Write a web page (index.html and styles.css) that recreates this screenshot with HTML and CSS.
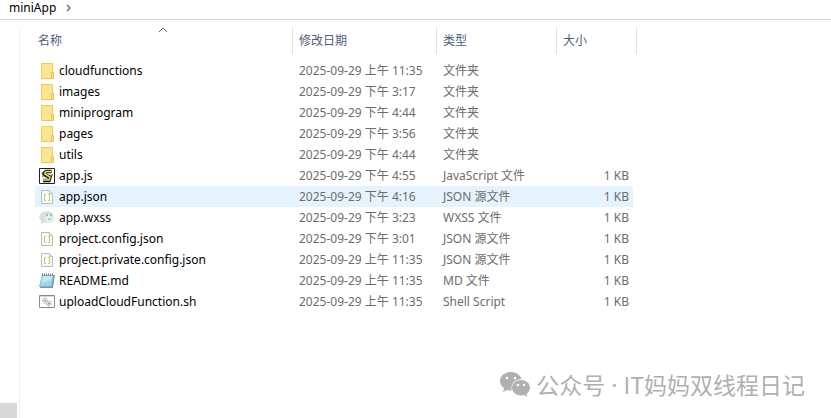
FILE: index.html
```html
<!DOCTYPE html>
<html lang="zh-CN">
<head>
    <meta charset="UTF-8">
    <meta name="viewport" content="width=device-width, initial-scale=1.0">
    <title>miniApp</title>
    <link rel="stylesheet" href="styles.css">
</head>
<body>
    <!-- icons shared by the rows -->
    <svg class="sprite" aria-hidden="true">
        <symbol id="icon-folder" viewBox="0 0 16 16">
            <path d="M2.500 0.500h11v15h-11z" fill="#ffe590" stroke="#eecb55"/>
            <path d="M12.500 9.500h2v6h-2z" fill="#ffe590" stroke="#e8c04a"/>
        </symbol>
        <symbol id="icon-js" viewBox="0 0 16 16">
            <path d="M0.500 0.500h15v15h-15z" fill="#fff" stroke="#222"/>
            <path d="M12.500 3.500H7L5 5.500l2 2 4 1.500-1 3.500H4" fill="none" stroke="#111" stroke-width="3.500"/>
            <path d="M12 3.500H7L5.500 5.500l2 1.500 3.500 2-1 3H4" fill="none" stroke="#ece45a" stroke-width="1.500"/>
            <path d="M3 8h2M12 7h2" stroke="#333"/>
        </symbol>
        <symbol id="icon-json" viewBox="0 0 16 16">
            <path d="M2.500 1.500h8l3 3v10h-11z" fill="#fbfbfb" stroke="#b9bcc0"/>
            <path d="M10.500 1.500v3h3" fill="#eee" stroke="#b9bcc0"/>
            <path d="M7 5.500H5.500V11.500H7M9 5.500h1.500v6H9" fill="none" stroke="#c5cc5c"/>
        </symbol>
        <symbol id="icon-wxss" viewBox="0 0 16 16">
            <ellipse cx="7.500" cy="7" rx="7.500" ry="6" fill="#dedfe0"/>
            <path d="M2 11v3l4-2z" fill="#dedfe0"/>
            <ellipse cx="11" cy="8.500" rx="5" ry="4.500" fill="#e9eeec"/>
            <path d="M7 4l2 1-2 1M13 4l-2 1 2 1M9 9q1.500 1 3 0" fill="none" stroke="#58cf9c"/>
        </symbol>
        <symbol id="icon-note" viewBox="0 0 16 16">
            <path d="M4 2h12l-2 13H1z" fill="#8c9398"/>
            <path d="M3 2h12l-2 12H0z" fill="#6fb5cf"/>
            <path d="M3 3h11l-2 10H1z" fill="#9bd6ea"/>
            <path d="M4 3h9l-1 4-9 3z" fill="#bfe8f5"/>
            <path d="M3 1.500h12" stroke="#777" stroke-width="2" stroke-dasharray="1 1"/>
        </symbol>
        <symbol id="icon-sh" viewBox="0 0 16 16">
            <path d="M0.500 1.500h15v12h-15z" fill="#fff" stroke="#85898c"/>
            <path d="M1 2.500h14" stroke="#d4d7da"/>
            <circle cx="6" cy="6.500" r="2.500" fill="#eee" stroke="#9a9da0" stroke-dasharray="2 1"/>
            <circle cx="6" cy="6.500" r="1" fill="#8f9498"/>
            <circle cx="10" cy="9.500" r="2.500" fill="#dceaf4" stroke="#8faec4" stroke-dasharray="2 1"/>
            <circle cx="10" cy="9.500" r="1" fill="#7f9db3"/>
        </symbol>
    </svg>

    <nav class="address-bar">
        <button type="button" class="crumb">miniApp</button>
        <svg class="crumb-arrow" viewBox="0 0 6 8" aria-hidden="true"><path d="M1 1l3 3-3 3"/></svg>
    </nav>

    <main class="explorer">
        <div class="tree-pane">
            <div class="scroll-corner"></div>
        </div>

        <div class="file-pane">
            <table class="files">
                <colgroup>
                    <col class="col-name">
                    <col class="col-date">
                    <col class="col-type">
                    <col class="col-size">
                </colgroup>
                <thead>
                    <tr>
                        <th class="name">
                            <button type="button">名称</button>
                            <svg class="sort-arrow" viewBox="0 0 10 6" aria-hidden="true"><path d="M1 5l4-4 4 4"/></svg>
                        </th>
                        <th><button type="button">修改日期</button></th>
                        <th><button type="button">类型</button></th>
                        <th><button type="button">大小</button></th>
                    </tr>
                </thead>
                <tbody>
                    <tr>
                        <td class="name"><svg class="icon"><use href="#icon-folder"/></svg>cloudfunctions</td>
                        <td>2025-09-29 上午 11:35</td><td>文件夹</td><td class="size"></td>
                    </tr>
                    <tr>
                        <td class="name"><svg class="icon"><use href="#icon-folder"/></svg>images</td>
                        <td>2025-09-29 下午 3:17</td><td>文件夹</td><td class="size"></td>
                    </tr>
                    <tr>
                        <td class="name"><svg class="icon"><use href="#icon-folder"/></svg>miniprogram</td>
                        <td>2025-09-29 下午 4:44</td><td>文件夹</td><td class="size"></td>
                    </tr>
                    <tr>
                        <td class="name"><svg class="icon"><use href="#icon-folder"/></svg>pages</td>
                        <td>2025-09-29 下午 3:56</td><td>文件夹</td><td class="size"></td>
                    </tr>
                    <tr>
                        <td class="name"><svg class="icon"><use href="#icon-folder"/></svg>utils</td>
                        <td>2025-09-29 下午 4:44</td><td>文件夹</td><td class="size"></td>
                    </tr>
                    <tr>
                        <td class="name"><svg class="icon"><use href="#icon-js"/></svg>app.js</td>
                        <td>2025-09-29 下午 4:55</td><td>JavaScript 文件</td><td class="size">1 KB</td>
                    </tr>
                    <tr class="selected">
                        <td class="name"><svg class="icon"><use href="#icon-json"/></svg>app.json</td>
                        <td>2025-09-29 下午 4:16</td><td>JSON 源文件</td><td class="size">1 KB</td>
                    </tr>
                    <tr>
                        <td class="name"><svg class="icon"><use href="#icon-wxss"/></svg>app.wxss</td>
                        <td>2025-09-29 下午 3:23</td><td>WXSS 文件</td><td class="size">1 KB</td>
                    </tr>
                    <tr>
                        <td class="name"><svg class="icon"><use href="#icon-json"/></svg>project.config.json</td>
                        <td>2025-09-29 下午 3:01</td><td>JSON 源文件</td><td class="size">1 KB</td>
                    </tr>
                    <tr>
                        <td class="name"><svg class="icon"><use href="#icon-json"/></svg>project.private.config.json</td>
                        <td>2025-09-29 上午 11:35</td><td>JSON 源文件</td><td class="size">1 KB</td>
                    </tr>
                    <tr>
                        <td class="name"><svg class="icon"><use href="#icon-note"/></svg>README.md</td>
                        <td>2025-09-29 上午 11:35</td><td>MD 文件</td><td class="size">1 KB</td>
                    </tr>
                    <tr>
                        <td class="name"><svg class="icon"><use href="#icon-sh"/></svg>uploadCloudFunction.sh</td>
                        <td>2025-09-29 上午 11:35</td><td>Shell Script</td><td class="size">1 KB</td>
                    </tr>
                </tbody>
            </table>
        </div>
    </main>

    <div class="watermark">
        <svg class="wechat" viewBox="0 0 30 25" aria-hidden="true">
            <path d="M11 0C5 0 0 4 0 9c0 3 1.500 5.500 4 7l-1 4 4-2c1.500.5 3 .6 5 .5C10 12 15 7 21.500 7 20.500 3 16 0 11 0z"/>
            <path d="M21 8c-5 0-9 3.400-9 7.700s4 7.700 9 7.700c1 0 2-.1 3-.4l3.500 2-1-3c2-1.500 3.500-3.700 3.500-6.300C30 11.400 26 8 21 8z"/>
            <g class="eyes">
                <circle cx="7" cy="6" r="1.300"/><circle cx="15" cy="6" r="1.300"/>
                <circle cx="18" cy="13" r="1.200"/><circle cx="24" cy="13" r="1.200"/>
            </g>
        </svg>
        <span>公众号<span class="dot"> · </span>IT妈妈双线程日记</span>
    </div>
</body>
</html>
```
FILE: styles.css
```css
body {
    margin: 0;
    height: 100vh;
    display: flex;
    flex-direction: column;
    background-color: #fff;
    color: #000;
    font-family: "Noto Sans", "Noto Sans CJK SC", sans-serif;
    font-size: 12px;
    line-height: 20px;
}

button {
    padding: 0;
    border: none;
    background: none;
    color: inherit;
    font: inherit;
    cursor: pointer;
}

.sprite {
    display: none;
}

.address-bar {
    display: flex;
    align-items: center;
    gap: 10px;
    height: 19px;
    padding: 0 9px;
    border-bottom: 1px solid #d9d9d9;
}

.crumb {
    line-height: 16px;
    margin-bottom: 3px;
}

.crumb-arrow {
    width: 6px;
    height: 8px;
    margin-bottom: 3px;
    fill: none;
    stroke: #777;
    stroke-width: 1.5;
}

.explorer {
    flex: 1;
    display: flex;
    padding-top: 7px;
}

.tree-pane {
    width: 19px;
    display: flex;
    flex-direction: column;
    justify-content: flex-end;
    border-right: 1px solid #f2f2f2;
}

.scroll-corner {
    width: 17px;
    height: 15px;
    background-color: #d9d9d9;
}

.file-pane {
    flex: 1;
    padding-left: 15px;
}

.files {
    table-layout: fixed;
    width: 602px;
    border-collapse: separate;
    border-spacing: 0;
}

.col-name {
    width: 258px;
}

.col-date {
    width: 144px;
}

.col-type {
    width: 120px;
}

.col-size {
    width: 80px;
}

.files th {
    position: relative;
    height: 27px;
    padding: 0 6px;
    border-right: 1px solid #e2e2e2;
    color: #4c607a;
    font-weight: normal;
    text-align: left;
}

.files th.name {
    padding-left: 3px;
}

.sort-arrow {
    position: absolute;
    top: 0;
    left: 50%;
    width: 10px;
    height: 6px;
    margin-left: -6px;
    fill: none;
    stroke: #666;
}

.files tbody::before {
    content: "";
    display: block;
    height: 6px;
}

.files td {
    height: 21px;
    padding: 0 6px;
    color: #6d6d6d;
    white-space: nowrap;
}

.files td.name {
    padding-left: 4px;
    color: #000;
}

.files td.size {
    padding-right: 4px;
    border-right: 4px solid transparent;
    background-clip: padding-box;
    text-align: right;
}

.files tr.selected td {
    background-color: #e5f3ff;
}

.icon {
    width: 16px;
    height: 16px;
    margin-right: 4px;
    vertical-align: middle;
}

.watermark {
    position: absolute;
    right: 26px;
    bottom: 18px;
    display: flex;
    align-items: center;
    gap: 6px;
    color: #b0b0b0;
    font-family: "Noto Sans CJK SC", sans-serif;
    font-size: 23px;
    line-height: 30px;
    white-space: nowrap;
}

.watermark .dot {
    font-family: "Noto Sans", sans-serif;
    white-space: pre;
}

.wechat {
    width: 30px;
    height: 25px;
    fill: #b0b0b0;
}

.wechat .eyes {
    fill: #fff;
}
```
